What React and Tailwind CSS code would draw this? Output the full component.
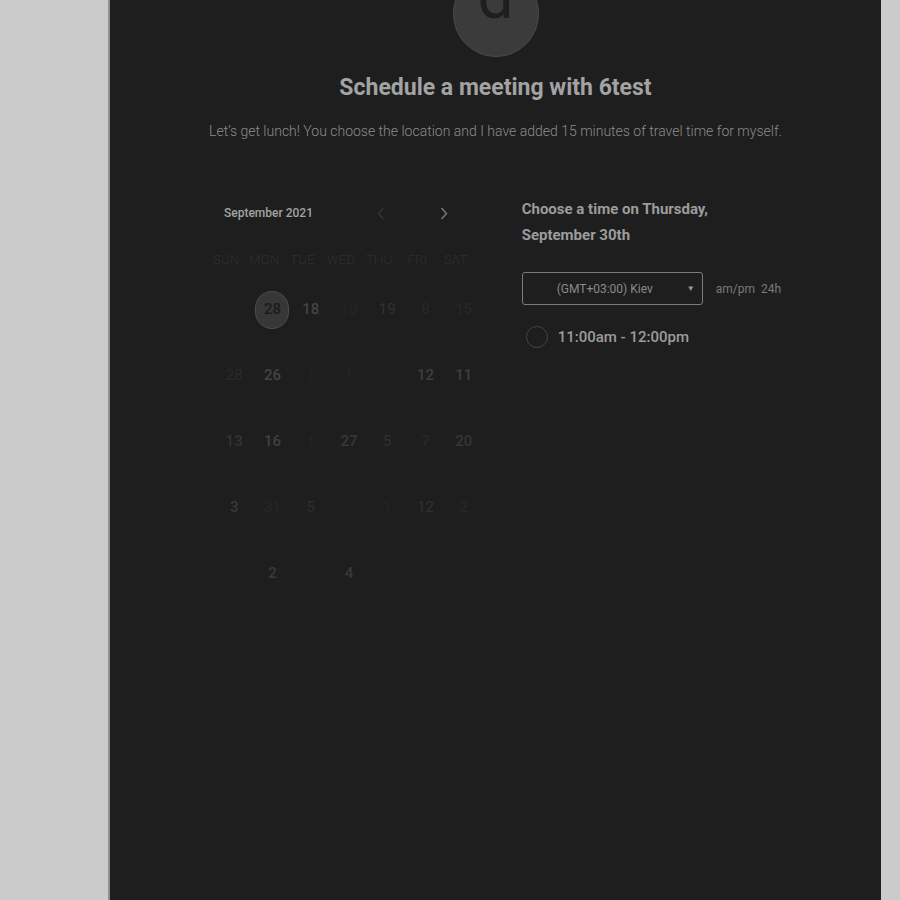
const weekdays = ["SUN", "MON", "TUE", "WED", "THU", "FRI", "SAT"];

// each cell: [text, colour class]
const rows = [
  [["-", "text-[#252525]"], ["28", "sel"], ["18", "text-[#444444]"], ["10", "text-[#242424]"], ["19", "text-[#323232] font-normal"], ["8", "text-[#262626]"], ["15", "text-[#262626]"]],
  [["28", "text-[#2a2a2a] font-normal"], ["26", "text-[#444444]"], ["1", "text-[#222222]"], ["1", "text-[#232323]"], ["", ""], ["12", "text-[#3e3e3e]"], ["11", "text-[#3e3e3e]"]],
  [["13", "text-[#343434]"], ["16", "text-[#404040]"], ["1", "text-[#242424]"], ["27", "text-[#383838]"], ["5", "text-[#313131] font-normal"], ["7", "text-[#272727]"], ["20", "text-[#363636]"]],
  [["3", "text-[#383838]"], ["31", "text-[#282828] font-normal"], ["5", "text-[#2e2e2e] font-normal"], ["", ""], ["1", "text-[#242424]"], ["12", "text-[#313131] font-normal"], ["2", "text-[#262626]"]],
  [["-", "text-[#242424]"], ["2", "text-[#3a3a3a]"], ["", ""], ["4", "text-[#3a3a3a]"], ["-", "text-[#242424]"], ["", ""], ["", ""]],
];

const Chevron = ({ dir, color }) => (
  <svg width="8" height="13" viewBox="0 0 8 13" fill="none" stroke={color} strokeWidth="1.5">
    {dir === "left" ? <path d="M6.5 1 1.5 6.5l5 5.5" /> : <path d="M1.5 1l5 5.5-5 5.5" />}
  </svg>
);

const App = () => {
  return (
    <div className="flex h-[900px] overflow-hidden bg-[#cbcbcb] font-['Roboto',sans-serif]">
      <main className="ml-[108px] flex h-[900px] w-[773px] flex-col items-center overflow-hidden border-l-2 border-[#8f8f8f] bg-[#1e1e1e]">
        <div className="-mt-[30px] flex h-[87px] w-[86px] items-start justify-center overflow-hidden rounded-full border border-[#4a4a4a] bg-[#3b3b3b]">
          <span className="mt-[-6px] text-[64px] font-normal leading-none text-[#1e1e1e]">d</span>
        </div>
        <h1 className="mt-[16px] text-[23px] font-bold leading-[30px] text-[#a3a3a3]">Schedule a meeting with 6test</h1>
        <p className="mt-[18px] text-[14px] font-light leading-[20px] text-[#8c8c8c]">
          Let’s get lunch! You choose the location and I have added 15 minutes of travel time for myself.
        </p>

        <div className="mt-[61px] flex w-[571px]">
          <section className="w-[313px]">
            <div className="flex h-[22px] items-center">
              <span className="ml-[14px] w-[153px] text-[12px] font-medium text-[#a3a3a3]">September 2021</span>
              <Chevron dir="left" color="#333333" />
              <span className="w-[55px]" />
              <Chevron dir="right" color="#777777" />
            </div>
            <div className="-ml-[3px] mt-[26px] grid w-[268px] grid-cols-7">
              {weekdays.map((d) => (
                <span key={d} className="text-center text-[13px] font-light tracking-wide text-[#2e2e2e]">{d}</span>
              ))}
            </div>
            <div className="ml-[5px] mt-[7px] w-[268px]">
              {rows.map((row, i) => (
                <div key={i} className="grid h-[66px] grid-cols-7 items-center">
                  {row.map(([t, c], j) =>
                    c === "sel" ? (
                      <div key={j} className="flex justify-center">
                        <span className="flex h-[38px] w-[34px] items-center justify-center rounded-full border border-[#4c4c4c] bg-[#373737] text-[15px] font-medium text-[#1c1c1c]">
                          {t}
                        </span>
                      </div>
                    ) : (
                      <span key={j} className={`text-center text-[15px] font-medium ${c}`}>{t}</span>
                    )
                  )}
                </div>
              ))}
            </div>
          </section>

          <section className="flex-1">
            <h2 className="-mt-[6px] text-[15px] font-bold leading-[26px] text-[#9c9c9c]">
              Choose a time on Thursday,
              <br />
              September 30th
            </h2>
            <div className="mt-[24px] flex items-center">
              <div className="flex h-[33px] w-[181px] items-center rounded-[3px] border border-[#7c7c7c] pl-[34px] pr-[7px]">
                <span className="flex-1 text-[12px] text-[#8a8a8a]">(GMT+03:00) Kiev</span>
                <span className="text-[8px] text-[#9a9a9a]">▼</span>
              </div>
              <span className="ml-[13px] text-[12px] text-[#7a7a7a]">am/pm&nbsp;&nbsp;24h</span>
            </div>
            <div className="mt-[21px] flex items-center">
              <span className="ml-[4px] h-[22px] w-[22px] rounded-full border border-[#444444]" />
              <span className="ml-[10px] text-[15px] font-medium text-[#9c9c9c]">11:00am - 12:00pm</span>
            </div>
          </section>
        </div>
      </main>
    </div>
  );
};

export default App;
